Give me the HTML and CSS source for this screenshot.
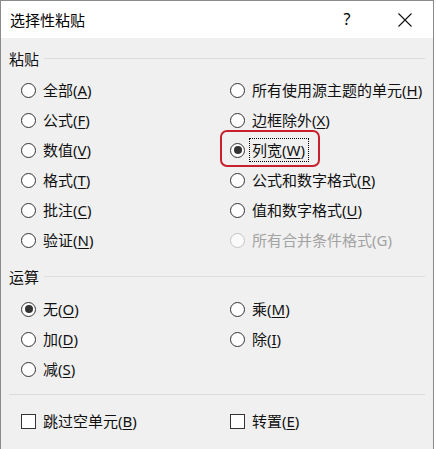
FILE: index.html
```html
<!DOCTYPE html>
<html lang="zh-CN">
<head>
<meta charset="utf-8">
<title>选择性粘贴</title>
<link rel="stylesheet" href="styles.css">
</head>
<body>
<div class="window">
  <div class="titlebar">
    <span class="title">选择性粘贴</span>
    <span class="tbtn help">?</span>
    <span class="tbtn close">
      <svg width="14" height="14" viewBox="0 0 14 14"><path d="M0.5 0.5 L13.5 13.5 M13.5 0.5 L0.5 13.5" stroke="#111" stroke-width="1.1" fill="none"/></svg>
    </span>
  </div>
  <div class="content">
    <div class="group-label"><span>粘贴</span><span class="rule"></span></div>
    <div class="grid paste">
      <div class="opt"><span class="radio"></span><span class="lbl">全部(<u>A</u>)</span></div>
      <div class="opt"><span class="radio"></span><span class="lbl">所有使用源主题的单元(<u>H</u>)</span></div>
      <div class="opt"><span class="radio"></span><span class="lbl">公式(<u>F</u>)</span></div>
      <div class="opt"><span class="radio"></span><span class="lbl">边框除外(<u>X</u>)</span></div>
      <div class="opt"><span class="radio"></span><span class="lbl">数值(<u>V</u>)</span></div>
      <div class="opt highlight"><span class="radio checked"></span><span class="lbl focus">列宽(<u>W</u>)</span><span class="mark"></span></div>
      <div class="opt"><span class="radio"></span><span class="lbl">格式(<u>T</u>)</span></div>
      <div class="opt"><span class="radio"></span><span class="lbl">公式和数字格式(<u>R</u>)</span></div>
      <div class="opt"><span class="radio"></span><span class="lbl">批注(<u>C</u>)</span></div>
      <div class="opt"><span class="radio"></span><span class="lbl">值和数字格式(<u>U</u>)</span></div>
      <div class="opt"><span class="radio"></span><span class="lbl">验证(<u>N</u>)</span></div>
      <div class="opt disabled"><span class="radio"></span><span class="lbl">所有合并条件格式(G)</span></div>
    </div>
    <div class="group-label op"><span>运算</span><span class="rule"></span></div>
    <div class="grid ops">
      <div class="opt"><span class="radio checked"></span><span class="lbl">无(<u>O</u>)</span></div>
      <div class="opt"><span class="radio"></span><span class="lbl">乘(<u>M</u>)</span></div>
      <div class="opt"><span class="radio"></span><span class="lbl">加(<u>D</u>)</span></div>
      <div class="opt"><span class="radio"></span><span class="lbl">除(<u>I</u>)</span></div>
      <div class="opt"><span class="radio"></span><span class="lbl">减(<u>S</u>)</span></div>
    </div>
    <div class="separator"></div>
    <div class="grid checks">
      <div class="opt"><span class="check"></span><span class="lbl">跳过空单元(<u>B</u>)</span></div>
      <div class="opt"><span class="check"></span><span class="lbl">转置(<u>E</u>)</span></div>
    </div>
  </div>
</div>
</body>
</html>
```
FILE: styles.css
```css
* { box-sizing: border-box; }
html, body {
  margin: 0;
  padding: 0;
  background: #ffffff;
}
body {
  font-family: "Noto Sans", "Noto Sans CJK SC", sans-serif;
  font-size: 15px;
  color: #111;
}
.window {
  width: 434px;
  height: 449px;
  border: 1px solid #8a8a8a;
  border-bottom: none;
  background: #f0f0f0;
  overflow: hidden;
}
.titlebar {
  height: 37px;
  background: #ffffff;
  display: flex;
  align-items: center;
  padding-left: 9px;
  padding-right: 13px;
}
.title {
  font-size: 15px;
  line-height: 20px;
  flex: 1;
  color: #000;
}
.tbtn {
  width: 30px;
  height: 30px;
  display: flex;
  align-items: center;
  justify-content: center;
}
.help {
  font-size: 16px;
  margin-right: 28px;
  color: #000;
  padding-bottom: 2px;
}
.content {
  padding: 11px 8px 0 8px;
}
.group-label {
  display: flex;
  align-items: center;
  height: 20px;
  line-height: 20px;
}
.group-label .rule {
  flex: 1;
  height: 1px;
  background: #dcdcdc;
  margin-left: 5px;
  margin-top: -2px;
}
.group-label.op {
  margin-top: 12px;
}
.grid {
  display: grid;
  grid-template-columns: 209px 1fr;
  grid-auto-rows: 30px;
  padding-left: 12px;
}
.paste { margin-top: 6px; }
.ops { margin-top: 7px; }
.opt {
  display: flex;
  align-items: center;
  line-height: 20px;
  white-space: nowrap;
}
.radio {
  width: 15px;
  height: 15px;
  border: 1px solid #333;
  border-radius: 50%;
  background: #fff;
  display: inline-flex;
  align-items: center;
  justify-content: center;
  margin-right: 7px;
  flex: none;
}
.radio.checked::after {
  content: "";
  width: 8px;
  height: 8px;
  border-radius: 50%;
  background: #333;
}
.check {
  width: 15px;
  height: 15px;
  border: 1px solid #333;
  background: #fff;
  margin-right: 7px;
  flex: none;
}
u {
  text-decoration: underline;
  text-underline-offset: 2px;
  text-decoration-thickness: 1px;
}
.disabled { color: #a3a3a3; }
.disabled .radio {
  border-color: #c4c4c4;
  background: #fafafa;
}
.highlight { position: relative; }
.focus {
  outline: 1px dotted #000;
  padding: 1px 3px 1px 2px;
  margin-left: -2px;
}
.mark {
  position: absolute;
  left: -10px;
  top: -5px;
  width: 100px;
  height: 37px;
  border: 2px solid #c9202d;
  border-radius: 7px;
}
.separator {
  height: 1px;
  background: #dadada;
  margin-top: 10px;
}
.checks { margin-top: 11px; }
```
